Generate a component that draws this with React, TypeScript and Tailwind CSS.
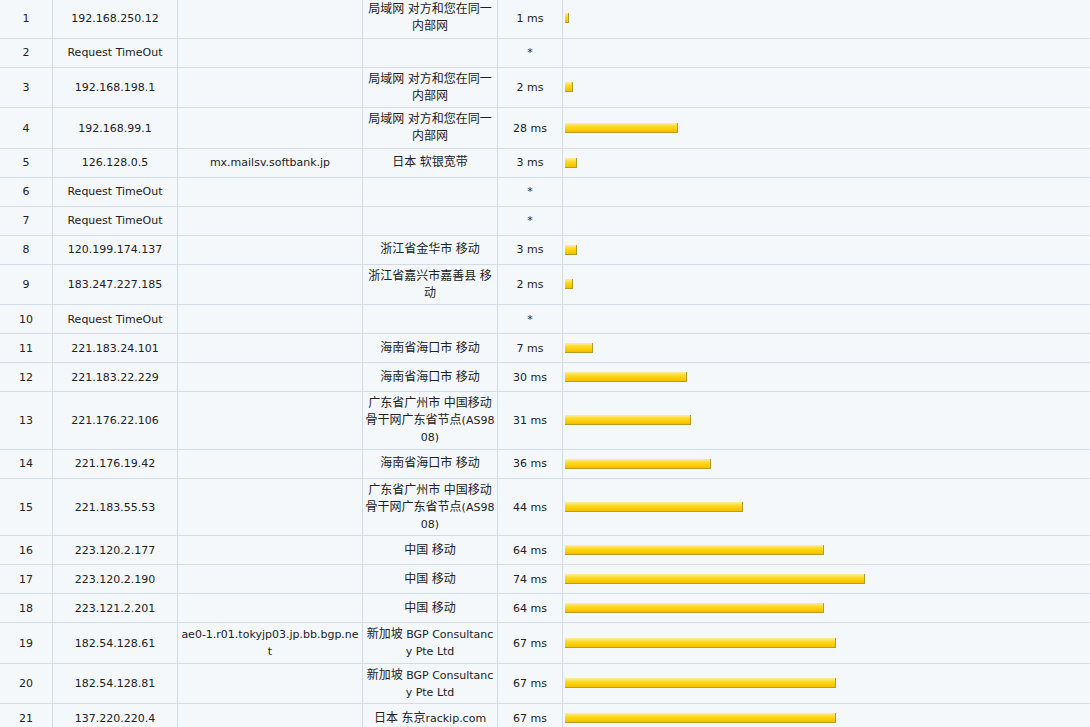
import React from "react";

type Row = { n: number; ip: string; host: string; loc: string; ms: number | null };

const rows: Row[] = [
  { n: 1, ip: "192.168.250.12", host: "", loc: "局域网 对方和您在同一内部网", ms: 1 },
  { n: 2, ip: "Request TimeOut", host: "", loc: "", ms: null },
  { n: 3, ip: "192.168.198.1", host: "", loc: "局域网 对方和您在同一内部网", ms: 2 },
  { n: 4, ip: "192.168.99.1", host: "", loc: "局域网 对方和您在同一内部网", ms: 28 },
  { n: 5, ip: "126.128.0.5", host: "mx.mailsv.softbank.jp", loc: "日本 软银宽带", ms: 3 },
  { n: 6, ip: "Request TimeOut", host: "", loc: "", ms: null },
  { n: 7, ip: "Request TimeOut", host: "", loc: "", ms: null },
  { n: 8, ip: "120.199.174.137", host: "", loc: "浙江省金华市 移动", ms: 3 },
  { n: 9, ip: "183.247.227.185", host: "", loc: "浙江省嘉兴市嘉善县 移动", ms: 2 },
  { n: 10, ip: "Request TimeOut", host: "", loc: "", ms: null },
  { n: 11, ip: "221.183.24.101", host: "", loc: "海南省海口市 移动", ms: 7 },
  { n: 12, ip: "221.183.22.229", host: "", loc: "海南省海口市 移动", ms: 30 },
  { n: 13, ip: "221.176.22.106", host: "", loc: "广东省广州市 中国移动骨干网广东省节点(AS9808)", ms: 31 },
  { n: 14, ip: "221.176.19.42", host: "", loc: "海南省海口市 移动", ms: 36 },
  { n: 15, ip: "221.183.55.53", host: "", loc: "广东省广州市 中国移动骨干网广东省节点(AS9808)", ms: 44 },
  { n: 16, ip: "223.120.2.177", host: "", loc: "中国 移动", ms: 64 },
  { n: 17, ip: "223.120.2.190", host: "", loc: "中国 移动", ms: 74 },
  { n: 18, ip: "223.121.2.201", host: "", loc: "中国 移动", ms: 64 },
  { n: 19, ip: "182.54.128.61", host: "ae0-1.r01.tokyjp03.jp.bb.bgp.net", loc: "新加坡 BGP Consultancy Pte Ltd", ms: 67 },
  { n: 20, ip: "182.54.128.81", host: "", loc: "新加坡 BGP Consultancy Pte Ltd", ms: 67 },
  { n: 21, ip: "137.220.220.4", host: "", loc: "日本 东京rackip.com", ms: 67 },
];

const cell =
  "flex items-center justify-center text-center border-r border-[#d3dbe6] px-[3px] pt-[3px] pb-[2.5px] break-all";
const locCell =
  "flex items-center justify-center text-center border-r border-[#d3dbe6] px-[2px] pt-[3px] pb-[2.5px] break-all";

function Mixed({ text }: { text: string }) {
  const parts = text.split(/([\u3000-\u9fff]+)/).filter((p) => p.length > 0);
  return (
    <span>
      {parts.map((p, i) =>
        /[\u3000-\u9fff]/.test(p) ? (
          <span key={i} className="text-[12px] leading-[12px]">
            {p}
          </span>
        ) : (
          <span key={i}>{p}</span>
        )
      )}
    </span>
  );
}

export default function App() {
  return (
    <div
      className="w-[1090px] h-[727px] overflow-hidden bg-[#f4f8fa] text-[#222] text-[11px] leading-[17px]"
      style={{ fontFamily: '"DejaVu Sans", "Noto Sans CJK SC", sans-serif' }}
    >
      <div className="-mt-[2px] flex flex-col">
        {rows.map((r) => (
          <div
            key={r.n}
            className="grid grid-cols-[53px_125px_185px_135px_65px_1fr] min-h-[29px] border-b border-[#d3dbe6]"
          >
            <div className={cell}>{r.n}</div>
            <div className={cell}>{r.ip}</div>
            <div className={cell}>{r.host}</div>
            <div className={locCell}>
              <Mixed text={r.loc} />
            </div>
            <div className={cell}>{r.ms === null ? "*" : `${r.ms} ms`}</div>
            <div className="flex items-center pl-[2px]">
              {r.ms !== null && (
                <div
                  className="h-[10px] border-b border-r border-[#b89a2a] bg-[linear-gradient(to_bottom,#ffeea0_0%,#ffdb2e_35%,#ffcc00_70%,#f2be00_100%)]"
                  style={{ width: Math.round(r.ms * 4.05) }}
                />
              )}
            </div>
          </div>
        ))}
      </div>
    </div>
  );
}
